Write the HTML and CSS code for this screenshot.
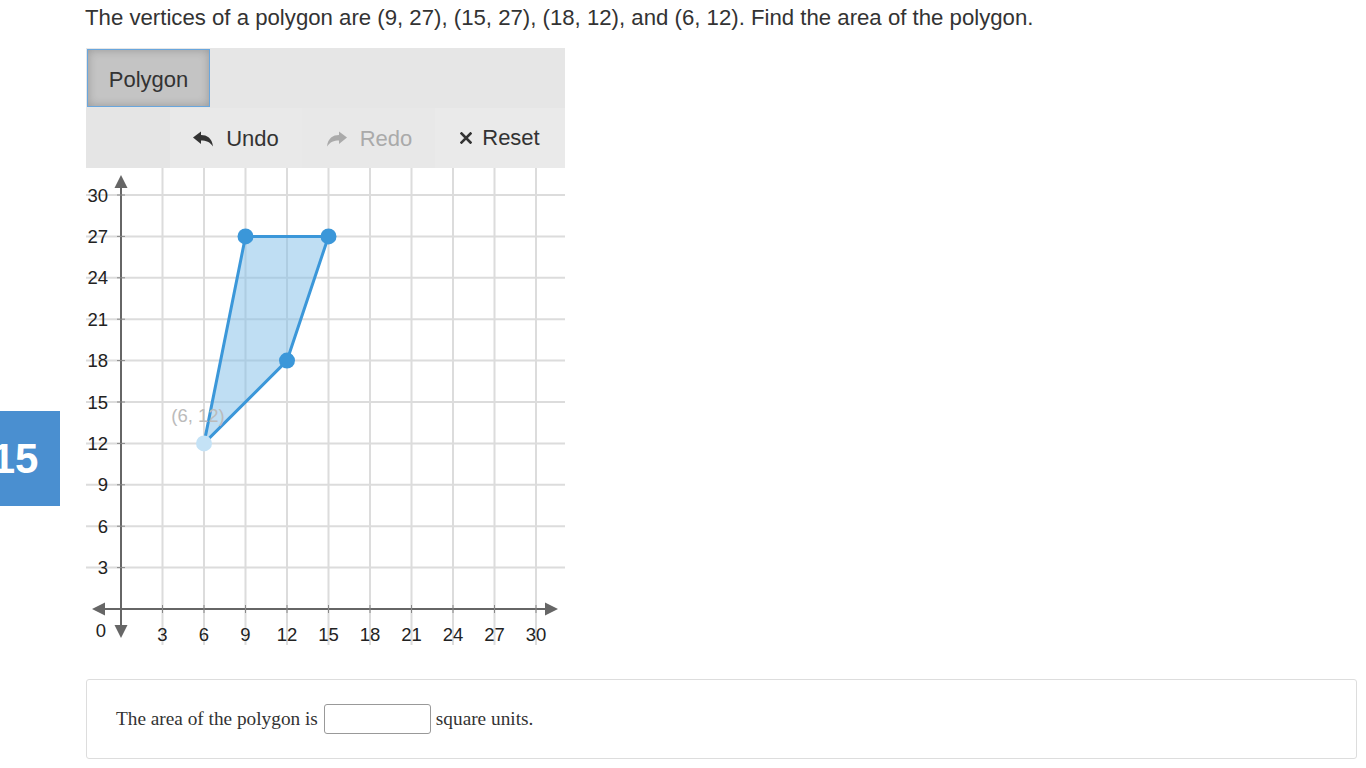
FILE: index.html
```html
<!DOCTYPE html>
<html>
<head>
<meta charset="utf-8">
<link rel="stylesheet" href="styles.css">
</head>
<body>
<div class="qnum">15</div>
<main class="page">
  <p class="question">The vertices of a polygon are (9, 27), (15, 27), (18, 12), and (6, 12). Find the area of the polygon.</p>
  <section class="widget">
    <div class="tools">
      <button class="tool active">Polygon</button>
    </div>
    <div class="actions">
      <div class="spacer"></div>
      <button class="act undo">
        <svg class="ico" viewBox="0 0 20 16" width="20" height="16"><path d="M0 6.5 L8 0.5 V4 C14 4 19 7 20 15.5 C17 11 13 9.5 8 9.5 V13 Z" fill="#333"/></svg>
        <span>Undo</span>
      </button>
      <button class="act redo">
        <svg class="ico" viewBox="0 0 20 16" width="20" height="16"><path d="M20 6.5 L12 0.5 V4 C6 4 1 7 0 15.5 C3 11 7 9.5 12 9.5 V13 Z" fill="#aaa"/></svg>
        <span>Redo</span>
      </button>
      <button class="act reset">
        <svg class="ico x" viewBox="0 0 12 12" width="12" height="12"><path d="M1.5 1.5 L10.5 10.5 M10.5 1.5 L1.5 10.5" stroke="#333" stroke-width="2.6" stroke-linecap="square"/></svg>
        <span>Reset</span>
      </button>
    </div>
    <svg class="graph" width="479" height="477" viewBox="0 0 479 477">
      <g class="grid" stroke="#dcdcdc" stroke-width="2">
        <line x1="76.5" y1="0" x2="76.5" y2="477"/>
        <line x1="118" y1="0" x2="118" y2="477"/>
        <line x1="159.5" y1="0" x2="159.5" y2="477"/>
        <line x1="201" y1="0" x2="201" y2="477"/>
        <line x1="242.5" y1="0" x2="242.5" y2="477"/>
        <line x1="284" y1="0" x2="284" y2="477"/>
        <line x1="325.5" y1="0" x2="325.5" y2="477"/>
        <line x1="367" y1="0" x2="367" y2="477"/>
        <line x1="408.5" y1="0" x2="408.5" y2="477"/>
        <line x1="450" y1="0" x2="450" y2="477"/>
        <line x1="0" y1="27" x2="479" y2="27"/>
        <line x1="0" y1="68.4" x2="479" y2="68.4"/>
        <line x1="0" y1="109.8" x2="479" y2="109.8"/>
        <line x1="0" y1="151.2" x2="479" y2="151.2"/>
        <line x1="0" y1="192.6" x2="479" y2="192.6"/>
        <line x1="0" y1="234" x2="479" y2="234"/>
        <line x1="0" y1="275.4" x2="479" y2="275.4"/>
        <line x1="0" y1="316.8" x2="479" y2="316.8"/>
        <line x1="0" y1="358.2" x2="479" y2="358.2"/>
        <line x1="0" y1="399.6" x2="479" y2="399.6"/>
      </g>
      <g class="axes" stroke="#666" stroke-width="2">
        <line x1="35" y1="18" x2="35" y2="460"/>
        <line x1="16" y1="441" x2="462" y2="441"/>
      </g>
      <g fill="#666">
        <polygon points="35,7 28.5,20 41.5,20"/>
        <polygon points="35,470 28.5,457 41.5,457"/>
        <polygon points="6,441 19,434.5 19,447.5"/>
        <polygon points="472,441 459,434.5 459,447.5"/>
      </g>
      <g class="ticks" stroke="#888" stroke-width="1">
        <line x1="76.5" y1="437" x2="76.5" y2="445"/>
        <line x1="118" y1="437" x2="118" y2="445"/>
        <line x1="159.5" y1="437" x2="159.5" y2="445"/>
        <line x1="201" y1="437" x2="201" y2="445"/>
        <line x1="242.5" y1="437" x2="242.5" y2="445"/>
        <line x1="284" y1="437" x2="284" y2="445"/>
        <line x1="325.5" y1="437" x2="325.5" y2="445"/>
        <line x1="367" y1="437" x2="367" y2="445"/>
        <line x1="408.5" y1="437" x2="408.5" y2="445"/>
        <line x1="450" y1="437" x2="450" y2="445"/>
        <line x1="31" y1="27" x2="39" y2="27"/>
        <line x1="31" y1="68.4" x2="39" y2="68.4"/>
        <line x1="31" y1="109.8" x2="39" y2="109.8"/>
        <line x1="31" y1="151.2" x2="39" y2="151.2"/>
        <line x1="31" y1="192.6" x2="39" y2="192.6"/>
        <line x1="31" y1="234" x2="39" y2="234"/>
        <line x1="31" y1="275.4" x2="39" y2="275.4"/>
        <line x1="31" y1="316.8" x2="39" y2="316.8"/>
        <line x1="31" y1="358.2" x2="39" y2="358.2"/>
        <line x1="31" y1="399.6" x2="39" y2="399.6"/>
      </g>
      <g class="ylab" text-anchor="end">
        <text x="22" y="33.5">30</text>
        <text x="22" y="74.9">27</text>
        <text x="22" y="116.3">24</text>
        <text x="22" y="157.7">21</text>
        <text x="22" y="199.1">18</text>
        <text x="22" y="240.5">15</text>
        <text x="22" y="281.9">12</text>
        <text x="22" y="323.3">9</text>
        <text x="22" y="364.7">6</text>
        <text x="22" y="406.1">3</text>
        <text x="20" y="469">0</text>
      </g>
      <g class="xlab" text-anchor="middle">
        <text x="76.5" y="473">3</text>
        <text x="118" y="473">6</text>
        <text x="159.5" y="473">9</text>
        <text x="201" y="473">12</text>
        <text x="242.5" y="473">15</text>
        <text x="284" y="473">18</text>
        <text x="325.5" y="473">21</text>
        <text x="367" y="473">24</text>
        <text x="408.5" y="473">27</text>
        <text x="450" y="473">30</text>
      </g>
      <polygon points="159.5,68.4 242.5,68.4 201,192.6 118,275.4" fill="#7fbde8" fill-opacity="0.5" stroke="#3b97d9" stroke-width="3" stroke-linejoin="round"/>
      <text class="ghost" x="112" y="254" text-anchor="middle">(6, 12)</text>
      <circle cx="159.5" cy="68.4" r="8" fill="#3b97d9"/>
      <circle cx="242.5" cy="68.4" r="8" fill="#3b97d9"/>
      <circle cx="201" cy="192.6" r="8" fill="#3b97d9"/>
      <circle cx="118" cy="275.4" r="8" fill="#c4e2f6"/>
    </svg>
  </section>
  <section class="answer">
    <span>The area of the polygon is</span>
    <input class="field" type="text">
    <span>square units.</span>
  </section>
</main>
</body>
</html>
```

FILE: styles.css
```css
html, body {
  margin: 0;
  padding: 0;
  background: #fff;
}
body {
  font-family: "Liberation Sans", Arial, sans-serif;
  color: #333;
  position: relative;
  min-height: 768px;
  overflow: hidden;
}
.qnum {
  position: absolute;
  left: -30px;
  top: 411px;
  width: 90px;
  height: 95px;
  background: #4a8fd0;
  color: #fff;
  font-weight: bold;
  font-size: 42px;
  display: flex;
  align-items: center;
  justify-content: center;
}
.page {
  padding-left: 85px;
  padding-top: 5px;
}
.question {
  margin: 0;
  font-size: 22.2px;
  line-height: 25px;
  color: #333;
}
.widget {
  margin-top: 18px;
  margin-left: 1px;
  width: 479px;
  display: flex;
  flex-direction: column;
}
.tools {
  height: 60px;
  background: #e6e6e6;
  padding: 1px;
  box-sizing: border-box;
  display: flex;
}
.tool {
  width: 123px;
  height: 58px;
  border: 1px solid #69a6dd;
  background: #c4c4c4;
  box-shadow: inset 0 0 10px rgba(0,0,0,0.22);
  font-family: "Liberation Sans", Arial, sans-serif;
  font-size: 22px;
  color: #333;
  padding: 4px 0 0 0;
  margin: 0;
}
.actions {
  height: 60px;
  display: flex;
  background: #e5e5e5;
}
.spacer {
  width: 84px;
}
.act {
  border: none;
  margin: 0;
  padding: 0;
  background: #e9e9e9;
  font-family: "Liberation Sans", Arial, sans-serif;
  font-size: 22px;
  color: #333;
  display: flex;
  align-items: center;
  justify-content: center;
  gap: 13px;
  height: 60px;
  padding-top: 2px;
}
.undo { width: 132px; }
.redo { width: 133px; color: #aaa; padding-left: 2px; background: #e8e8e8; }
.reset { width: 130px; gap: 10px; padding-top: 0; background: #eaeaea; }
.ico { display: block; }
.graph {
  display: block;
  background: #fff;
}
.graph text {
  font-family: "Liberation Sans", Arial, sans-serif;
  font-size: 18.5px;
  fill: #222;
}
.graph .ghost {
  fill: #bbb;
}
.answer {
  margin-top: 34px;
  margin-left: 1px;
  width: 1271px;
  height: 80px;
  box-sizing: border-box;
  border: 1px solid #ddd;
  border-radius: 3px;
  display: flex;
  align-items: center;
  padding-left: 29px;
  padding-top: 0;
  font-family: "Liberation Serif", "Times New Roman", serif;
  font-size: 19.3px;
  color: #333;
}
.field {
  width: 107px;
  height: 30px;
  box-sizing: border-box;
  border: 1px solid #999;
  border-radius: 3px;
  margin: 0 5px 0 6px;
  padding: 0;
  background: #fff;
}
```
